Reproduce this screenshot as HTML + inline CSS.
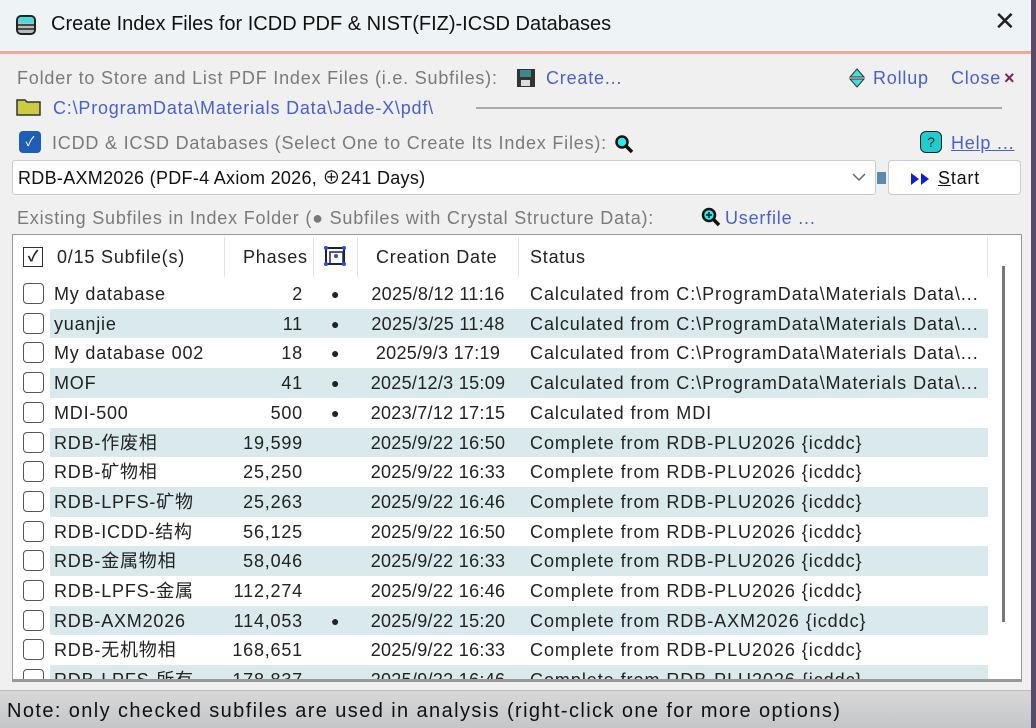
<!DOCTYPE html>
<html><head><meta charset="utf-8"><style>
*{margin:0;padding:0;box-sizing:border-box}
body{width:1036px;height:728px;overflow:hidden;background:#f0f0f0;font-family:"Liberation Sans","Noto Sans CJK SC",sans-serif;font-size:18px;line-height:22px;color:#222;position:relative;letter-spacing:0.8px}
.a{position:absolute;white-space:nowrap}
.g{color:#7a7a7a}
.l{color:#4a5fd0}
.row{position:absolute;left:13px;width:975px;height:29.7px}
.row.alt .bg{position:absolute;left:37px;right:0;top:0;bottom:0;background:#d9e9ec}
.cb{position:absolute;left:10px;top:4px;width:21px;height:21px;border:1.5px solid #555;border-radius:4px;background:#fff}
.c1,.c2,.c4,.c5{line-height:22px;height:22px}
.c1{position:absolute;left:41px;top:4px}
.c2{position:absolute;right:685px;top:4px}
.c3{position:absolute;left:318px;top:4px;font-size:14px}
.c4{position:absolute;left:340px;width:170px;text-align:center;top:4px;letter-spacing:0.3px}
.c5{position:absolute;left:517px;top:4px;letter-spacing:0.95px}
</style></head><body>
<div class="a" style="left:0;top:0;width:1036px;height:52px;background:#eef3f6"></div>
<div class="a" style="left:0;top:51px;width:1036px;height:3px;background:#f0a8a0"></div>
<svg class="a" style="left:16px;top:14px" width="20" height="22" viewBox="0 0 20 22"><rect x="1" y="2" width="18" height="18" rx="4" fill="#bbb" stroke="#222" stroke-width="2"/><rect x="2" y="3" width="16" height="6" rx="3" fill="#4dd"/><line x1="2" y1="11" x2="18" y2="11" stroke="#222" stroke-width="1.5"/><line x1="2" y1="15" x2="18" y2="15" stroke="#222" stroke-width="1.5"/></svg>
<div class="a" style="left:51px;top:13px;font-size:20px;color:#111;letter-spacing:0">Create Index Files for ICDD PDF &amp; NIST(FIZ)-ICSD Databases</div>
<div class="a" style="left:994px;top:10px;font-size:26px;color:#222;letter-spacing:0">✕</div>

<div class="a g" style="left:17px;top:67px">Folder to Store and List PDF Index Files (i.e. Subfiles):</div>
<svg class="a" style="left:516px;top:68px" width="20" height="20"><rect x="1" y="1" width="18" height="18" fill="#333"/><rect x="4" y="2" width="11" height="7" fill="#3a8a8a"/><rect x="5" y="12" width="9" height="6" fill="#ddd"/></svg>
<div class="a l" style="left:546px;top:67px">Create...</div>
<svg class="a" style="left:849px;top:68px" width="16" height="20"><path d="M8 1L15 9H1z" fill="#4dd" stroke="#333"/><path d="M8 19L15 11H1z" fill="#4dd" stroke="#333"/></svg>
<div class="a l" style="left:873px;top:67px">Rollup</div>
<div class="a l" style="left:951px;top:67px">Close</div>
<div class="a" style="left:1004px;top:67px;color:#802060;font-weight:bold">×</div>
<svg class="a" style="left:16px;top:96px" width="26" height="20"><path d="M1 4h8l2 2h13v13H1z" fill="#cc4" stroke="#333" stroke-width="1.5"/></svg>
<div class="a l" style="left:53px;top:97px">C:\ProgramData\Materials Data\Jade-X\pdf\</div>
<div class="a" style="left:476px;top:107px;width:526px;height:2px;background:#aaa"></div>
<div class="a" style="left:19px;top:131px;width:22px;height:22px;background:#1d5fb8;border-radius:4px;color:#fff;font-size:13px;text-align:center;line-height:22px;letter-spacing:0">✓</div>
<div class="a g" style="left:52px;top:132px">ICDD &amp; ICSD Databases (Select One to Create Its Index Files):</div>
<svg class="a" style="left:614px;top:134px" width="20" height="20"><circle cx="8" cy="8" r="5.5" fill="#2ee" stroke="#111" stroke-width="2.5"/><path d="M12 12l6 6" stroke="#111" stroke-width="3.5"/></svg>
<div class="a" style="left:920px;top:131px;width:22px;height:22px;border-radius:6px;background:#2cc;border:1.5px solid #222;font-size:14px;text-align:center;line-height:20px;letter-spacing:0">?</div>
<div class="a l" style="left:951px;top:132px;text-decoration:underline">Help ...</div>
<div class="a" style="left:12px;top:160px;width:864px;height:35px;background:#fff;border:1px solid #ccc;border-radius:3px"></div>
<div class="a" style="left:18px;top:167px;color:#111;letter-spacing:0.3px">RDB-AXM2026 (PDF-4 Axiom 2026, ⊕241 Days)</div>
<svg class="a" style="left:852px;top:172px" width="14" height="10"><path d="M1 2l6 6 6-6" fill="none" stroke="#666" stroke-width="1.5"/></svg>
<div class="a" style="left:877px;top:172px;width:9px;height:12px;background:#5a8ab0"></div>
<div class="a" style="left:888px;top:160px;width:133px;height:35px;background:#fff;border:1px solid #ccc;border-radius:4px"></div>
<svg class="a" style="left:911px;top:173px" width="20" height="12"><path d="M0 0l8 6-8 6zM10 0l8 6-8 6z" fill="#1020d0"/></svg>
<div class="a" style="left:938px;top:167px;color:#111"><u>S</u>tart</div>
<div class="a g" style="left:17px;top:207px">Existing Subfiles in Index Folder (● Subfiles with Crystal Structure Data):</div>
<svg class="a" style="left:701px;top:207px" width="20" height="20"><circle cx="8" cy="8" r="6" fill="#2ee" stroke="#111" stroke-width="2.5"/><path d="M8 5v6M5 8h6" stroke="#111" stroke-width="1.5"/><path d="M12 12l6 6" stroke="#111" stroke-width="3.5"/></svg>
<div class="a l" style="left:725px;top:207px">Userfile ...</div>

<div class="a" style="left:12px;top:234px;width:1010px;height:448px;background:#fff;border:1px solid #999"></div>
<div class="a" style="left:23px;top:247px;width:20px;height:20px;border:1.5px solid #333;background:#fff;font-size:15px;line-height:17px;text-align:center;font-weight:bold;letter-spacing:0">✓</div>
<div class="a" style="left:57px;top:246px">0/15 Subfile(s)</div>
<div class="a" style="left:224px;top:237px;width:1px;height:40px;background:#e4e4e4"></div>
<div class="a" style="left:243px;top:246px">Phases</div>
<div class="a" style="left:313px;top:237px;width:1px;height:40px;background:#e4e4e4"></div>
<svg class="a" style="left:323px;top:245px" width="26" height="24"><rect x="3" y="3" width="18" height="16" fill="none" stroke="#222" stroke-width="2"/><rect x="7" y="7" width="13" height="12" fill="none" stroke="#226" stroke-width="1.5"/><g fill="#2050e0"><circle cx="3" cy="3" r="2"/><circle cx="21" cy="3" r="2"/><circle cx="3" cy="19" r="2"/><circle cx="21" cy="19" r="2"/><circle cx="13" cy="11" r="2"/></g></svg>
<div class="a" style="left:357px;top:237px;width:1px;height:40px;background:#e4e4e4"></div>
<div class="a" style="left:376px;top:246px">Creation Date</div>
<div class="a" style="left:518px;top:237px;width:1px;height:40px;background:#e4e4e4"></div>
<div class="a" style="left:530px;top:246px">Status</div>
<div class="a" style="left:987px;top:237px;width:1px;height:40px;background:#e4e4e4"></div>
<div class="a" style="left:1002px;top:266px;width:3px;height:356px;background:#777"></div>

<div class="a" style="left:0;top:0;width:1036px;height:680px;overflow:hidden">
<div class="row" style="top:279px"><div class="cb"></div><div class="c1">My database</div><div class="c2">2</div><div class="c3">●</div><div class="c4">2025/8/12 11:16</div><div class="c5">Calculated from C:\ProgramData\Materials Data\...</div></div>
<div class="row alt" style="top:308.7px"><div class="bg"></div><div class="cb"></div><div class="c1">yuanjie</div><div class="c2">11</div><div class="c3">●</div><div class="c4">2025/3/25 11:48</div><div class="c5">Calculated from C:\ProgramData\Materials Data\...</div></div>
<div class="row" style="top:338.4px"><div class="cb"></div><div class="c1">My database 002</div><div class="c2">18</div><div class="c3">●</div><div class="c4">2025/9/3 17:19</div><div class="c5">Calculated from C:\ProgramData\Materials Data\...</div></div>
<div class="row alt" style="top:368.1px"><div class="bg"></div><div class="cb"></div><div class="c1">MOF</div><div class="c2">41</div><div class="c3">●</div><div class="c4">2025/12/3 15:09</div><div class="c5">Calculated from C:\ProgramData\Materials Data\...</div></div>
<div class="row" style="top:397.8px"><div class="cb"></div><div class="c1">MDI-500</div><div class="c2">500</div><div class="c3">●</div><div class="c4">2023/7/12 17:15</div><div class="c5">Calculated from MDI</div></div>
<div class="row alt" style="top:427.5px"><div class="bg"></div><div class="cb"></div><div class="c1">RDB-作废相</div><div class="c2">19,599</div><div class="c4">2025/9/22 16:50</div><div class="c5">Complete from RDB-PLU2026 {icddc}</div></div>
<div class="row" style="top:457.2px"><div class="cb"></div><div class="c1">RDB-矿物相</div><div class="c2">25,250</div><div class="c4">2025/9/22 16:33</div><div class="c5">Complete from RDB-PLU2026 {icddc}</div></div>
<div class="row alt" style="top:486.9px"><div class="bg"></div><div class="cb"></div><div class="c1">RDB-LPFS-矿物</div><div class="c2">25,263</div><div class="c4">2025/9/22 16:46</div><div class="c5">Complete from RDB-PLU2026 {icddc}</div></div>
<div class="row" style="top:516.6px"><div class="cb"></div><div class="c1">RDB-ICDD-结构</div><div class="c2">56,125</div><div class="c4">2025/9/22 16:50</div><div class="c5">Complete from RDB-PLU2026 {icddc}</div></div>
<div class="row alt" style="top:546.3px"><div class="bg"></div><div class="cb"></div><div class="c1">RDB-金属物相</div><div class="c2">58,046</div><div class="c4">2025/9/22 16:33</div><div class="c5">Complete from RDB-PLU2026 {icddc}</div></div>
<div class="row" style="top:576px"><div class="cb"></div><div class="c1">RDB-LPFS-金属</div><div class="c2">112,274</div><div class="c4">2025/9/22 16:46</div><div class="c5">Complete from RDB-PLU2026 {icddc}</div></div>
<div class="row alt" style="top:605.7px"><div class="bg"></div><div class="cb"></div><div class="c1">RDB-AXM2026</div><div class="c2">114,053</div><div class="c3">●</div><div class="c4">2025/9/22 15:20</div><div class="c5">Complete from RDB-AXM2026 {icddc}</div></div>
<div class="row" style="top:635.4px"><div class="cb"></div><div class="c1">RDB-无机物相</div><div class="c2">168,651</div><div class="c4">2025/9/22 16:33</div><div class="c5">Complete from RDB-PLU2026 {icddc}</div></div>
<div class="row alt" style="top:665.1px;height:14px;overflow:hidden"><div class="bg"></div><div class="cb"></div><div class="c1">RDB-LPFS-所有</div><div class="c2">178,837</div><div class="c4">2025/9/22 16:46</div><div class="c5">Complete from RDB-PLU2026 {icddc}</div></div>
</div>
<div class="a" style="left:12px;top:679px;width:1010px;height:2px;background:#999"></div>
<div class="a" style="left:0;top:690px;width:1036px;height:38px;background:linear-gradient(#d8d8d8,#c4c6c8);border-top:1px solid #bbb"></div>
<div class="a" style="left:7px;top:700px;color:#111;font-size:20px;letter-spacing:1.4px">Note: only checked subfiles are used in analysis (right-click one for more options)</div>
<div class="a" style="left:1031px;top:0;width:5px;height:728px;background:#5a4a6a"></div>
</body></html>
